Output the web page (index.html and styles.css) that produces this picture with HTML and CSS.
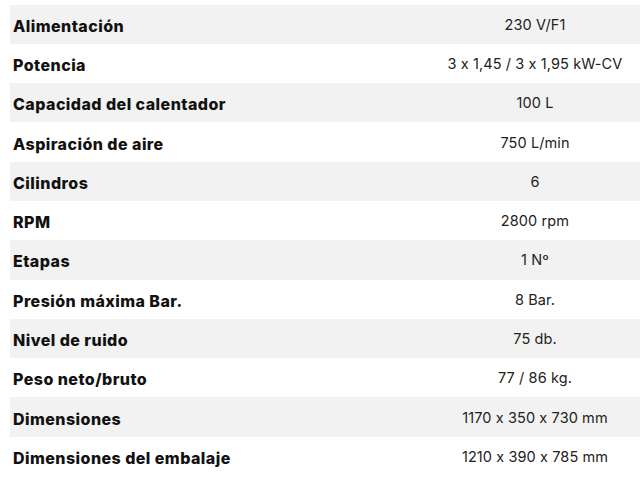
FILE: index.html
```html
<!DOCTYPE html>
<html lang="es">
<head>
<meta charset="utf-8">
<title>Especificaciones</title>
<link rel="stylesheet" href="styles.css">
</head>
<body>
<div class="specs">
  <div class="row"><div class="label">Alimentación</div><div class="value">230 V/F1</div></div>
  <div class="row"><div class="label">Potencia</div><div class="value">3 x 1,45 / 3 x 1,95 kW-CV</div></div>
  <div class="row"><div class="label">Capacidad del calentador</div><div class="value">100 L</div></div>
  <div class="row"><div class="label">Aspiración de aire</div><div class="value">750 L/min</div></div>
  <div class="row"><div class="label">Cilindros</div><div class="value">6</div></div>
  <div class="row"><div class="label">RPM</div><div class="value">2800 rpm</div></div>
  <div class="row"><div class="label">Etapas</div><div class="value">1 Nº</div></div>
  <div class="row"><div class="label">Presión máxima Bar.</div><div class="value">8 Bar.</div></div>
  <div class="row"><div class="label">Nivel de ruido</div><div class="value">75 db.</div></div>
  <div class="row"><div class="label">Peso neto/bruto</div><div class="value">77 / 86 kg.</div></div>
  <div class="row"><div class="label">Dimensiones</div><div class="value">1170 x 350 x 730 mm</div></div>
  <div class="row"><div class="label">Dimensiones del embalaje</div><div class="value">1210 x 390 x 785 mm</div></div>
</div>
</body>
</html>
```

FILE: styles.css
```css
html, body {
  margin: 0;
  padding: 0;
  background: #ffffff;
}
body {
  font-family: "Inter", "Open Sans", sans-serif;
  font-feature-settings: "calt" 0;
  color: #111111;
}
.specs {
  padding: 4.5px 0 0 10px;
  display: flex;
  flex-direction: column;
}
.row {
  display: grid;
  grid-template-columns: 1fr 210px;
  align-items: center;
  height: 39.3px;
}
.row:nth-child(odd) {
  background: #f2f2f2;
}
.label {
  padding-left: 3px;
  font-weight: 800;
  font-size: 16px;
  letter-spacing: 0.45px;
  color: #111111;
  padding-top: 3px;
}
.value {
  text-align: center;
  font-weight: 400;
  font-size: 14.5px;
  letter-spacing: 0.1px;
  color: #222222;
  padding-top: 0;
}
```
